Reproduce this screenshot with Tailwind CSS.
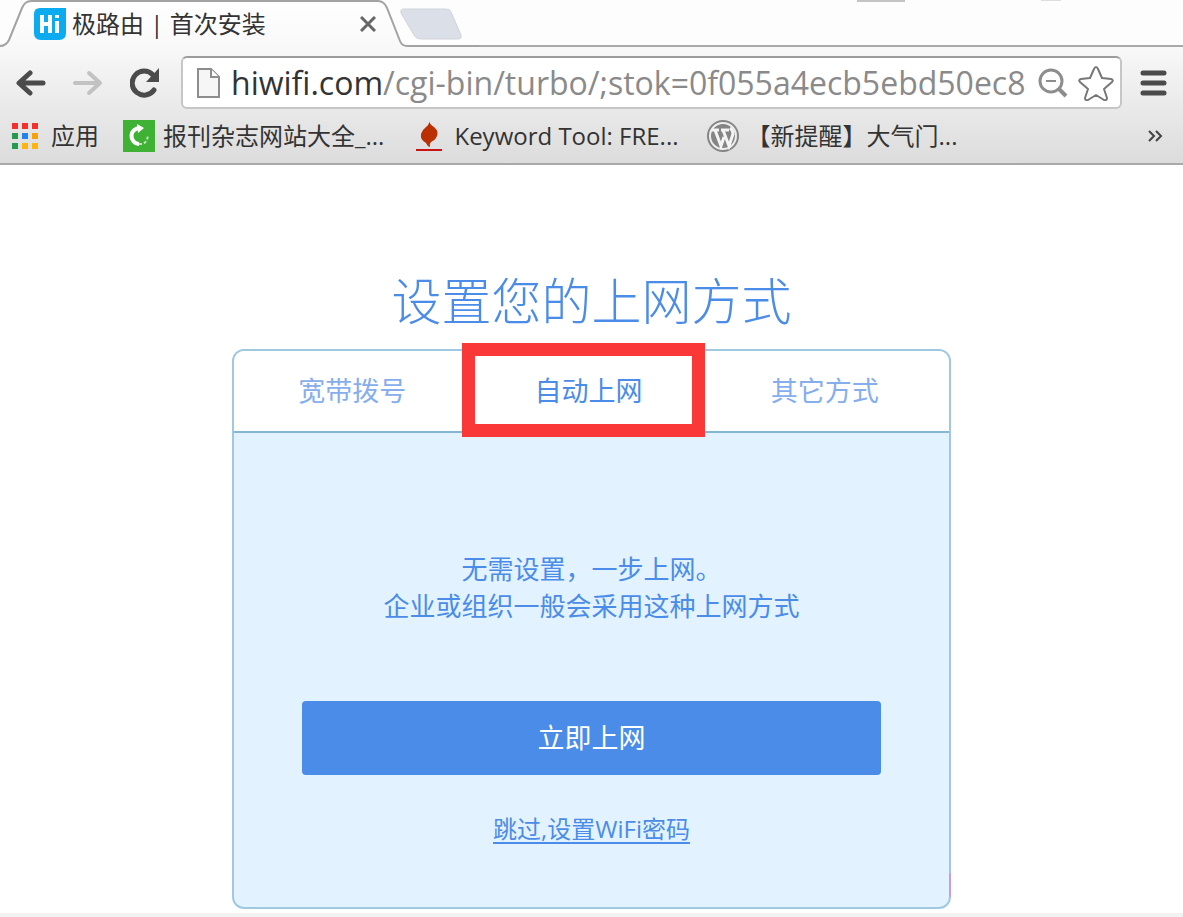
<!DOCTYPE html>
<html lang="zh-CN">
<head>
  <meta charset="UTF-8">
  <meta name="viewport" content="width=device-width, initial-scale=1.0">
  <title>极路由 | 首次安装</title>
  <script src="https://cdn.jsdelivr.net/npm/@tailwindcss/browser@4"></script>
</head>
<body class="min-h-screen flex flex-col bg-white font-['Open_Sans','Noto_Sans_CJK_SC',sans-serif]">

  <header class="border-b-2 border-[#a9a9a9]">
    <!-- Tab strip -->
    <div class="relative h-12 flex items-start overflow-hidden bg-[#fdfdfd]">
      <svg class="absolute left-0 top-0 h-12 w-[480px]" viewBox="0 0 480 48" fill="none">
        <defs>
          <linearGradient id="tab" x1="0" y1="0" x2="0" y2="1">
            <stop offset="0" stop-color="#ffffff" />
            <stop offset="1" stop-color="#f8f8f8" />
          </linearGradient>
        </defs>
        <path d="M404 9h42q4 0 5 3l10 23q1 4-3 4h-37q-5 0-7-4l-13-22q-1-4 3-4z" fill="#dbdfe8" stroke="#d0d3da" />
        <path d="M0 46q6 0 9-6L22 8q3-7 9-7h347q6 0 9 7l13 33q2 5 7 5h73v2H0z" fill="url(#tab)" />
        <path d="M0 46q6 0 9-6L22 8q3-7 9-7h347q6 0 9 7l13 33q2 5 7 5h73" stroke="#a3a3a3" stroke-width="2" />
      </svg>
      <div class="absolute left-[479px] right-0 top-[45px] h-[3px] border-t-2 border-[#a9a9a9] bg-[#f8f8f8]"></div>
      <!-- Clipped window controls -->
      <div class="absolute right-[278px] top-0 h-0.5 w-12 bg-[#c4c4c4]"></div>
      <div class="absolute right-[122px] top-0 h-px w-5 bg-[#dedede]"></div>

      <div class="relative flex h-12 w-[378px] items-center pl-[34px]">
        <svg class="size-8 shrink-0" viewBox="0 0 32 32">
          <path d="M6 0h26v25q0 7-7 7H7q-7 0-7-7V6q0-6 6-6z" fill="#0cabef" />
          <path d="M8 7v18M16 7v18M8 16h8M23 13v12M23 7v3" stroke="#fff" stroke-width="4" fill="none" />
        </svg>
        <span class="ml-1.5 flex-1 whitespace-nowrap text-2xl leading-8 text-[#333]">极路由 | 首次安装</span>
        <button class="p-0.5" aria-label="关闭标签页">
          <svg class="size-4" viewBox="0 0 16 16" fill="none" stroke="#666" stroke-width="3">
            <path d="M1 1l14 14M15 1L1 15" />
          </svg>
        </button>
      </div>
    </div>

    <div class="bg-linear-to-b from-[#f8f8f8] to-[#dcdcdc]">
      <!-- Address bar -->
      <div class="flex items-center pt-2 pl-4 pr-4">
        <button class="w-[57px]" aria-label="后退">
          <svg class="h-7 w-[30px]" viewBox="0 0 30 28" fill="none" stroke="#4b4b4b" stroke-width="5" stroke-linecap="round" stroke-linejoin="round">
            <path d="M27 14H5M14 4L3 14l11 10" />
          </svg>
        </button>
        <button class="w-[57px]" aria-label="前进">
          <svg class="h-7 w-[30px]" viewBox="0 0 30 28" fill="none" stroke="#c2c2c2" stroke-width="4" stroke-linecap="round" stroke-linejoin="round">
            <path d="M2 14h24M16 4l11 10-11 10" />
          </svg>
        </button>
        <button class="w-[51px]" aria-label="刷新">
          <svg class="size-[30px]" viewBox="0 0 30 30" fill="none">
            <path d="M24 22a12 12 0 1 1-1-15" stroke="#4b4b4b" stroke-width="5" stroke-linecap="round" />
            <path d="M29 0v14H16z" fill="#4b4b4b" />
          </svg>
        </button>
        <div class="flex h-[53px] min-w-0 flex-1 items-center rounded-md border-2 border-[#c6c6c6] border-t-[#9c9c9c] bg-white pl-3.5 pr-1.5">
          <svg class="h-[30px] w-6 shrink-0" viewBox="0 0 24 30" fill="#f6f6f6" stroke="#8d8d8d" stroke-width="2">
            <path d="M1 1h13l8 8v20H1z" />
            <path d="M14 1v8h8" fill="#fff" />
          </svg>
          <label for="url" class="ml-2.5 text-[32px] leading-10 text-[#333]">hiwifi.com</label>
          <input id="url" type="text" class="min-w-0 flex-1 text-[32px] leading-10 text-[#8a8a8a] outline-none" value="/cgi-bin/turbo/;stok=0f055a4ecb5ebd50ec8">
          <button class="shrink-0" aria-label="缩放">
            <svg class="size-[30px]" viewBox="0 0 30 30" fill="none" stroke="#8d8d8d" stroke-width="3">
              <circle cx="13" cy="13" r="11" />
              <path d="M8 13h10" stroke-width="2" />
              <path d="M21 21l7 7" stroke-width="4" />
            </svg>
          </button>
          <button class="ml-2.5 shrink-0" aria-label="为此网页添加书签">
            <svg class="size-9" viewBox="0 0 36 36" fill="#fff" stroke="#777" stroke-width="2" stroke-linejoin="round">
              <path d="M18 2q1 0 2 2l4 9 9 1q3 1 1 3l-8 7 3 9q0 3-3 2l-8-5-8 5q-3 1-3-2l3-9-8-7q-2-2 1-3l9-1 4-9q1-2 2-2z" />
            </svg>
          </button>
        </div>
        <button class="ml-[18px]" aria-label="菜单">
          <svg class="h-7 w-[27px]" viewBox="0 0 27 28" stroke="#4b4b4b" stroke-width="5" stroke-linecap="round">
            <path d="M3 4h21M3 14h21M3 24h21" />
          </svg>
        </button>
      </div>

      <!-- Bookmarks bar -->
      <nav class="flex h-[54px] items-center whitespace-nowrap pl-3 pr-5 text-2xl text-[#333]">
        <a href="#" class="flex items-center gap-3">
          <svg class="size-[27px]" viewBox="0 0 27 27">
            <path d="M0 0h6v6H0zM10 0h6v6h-6zM20 0h6v6h-6z" fill="#f5302c" />
            <path d="M0 10h6v6H0zM0 20h6v6H0z" fill="#239a50" />
            <path d="M10 10h6v6h-6z" fill="#1e82f0" />
            <path d="M20 10h6v6h-6z" fill="#f5a20a" />
            <path d="M10 20h6v6h-6zM20 20h6v6h-6z" fill="#fdb40c" />
          </svg>
          应用
        </a>
        <a href="#" class="ml-6 flex items-center gap-2">
          <svg class="size-8" viewBox="0 0 32 32" fill="none">
            <path d="M0 0h32v32H0z" fill="#3fb134" />
            <path d="M17 8a8 8 0 0 0-1 16" stroke="#fff" stroke-width="4" />
            <path d="M14 4l7 4-6 5z" fill="#fff" />
            <path d="M16 24q8 1 9-9" stroke="#c4e8c0" stroke-width="2" stroke-dasharray="3 2" />
          </svg>
          报刊杂志网站大全_...
        </a>
        <a href="#" class="ml-8 flex items-center gap-3">
          <svg class="h-8 w-[26px]" viewBox="0 0 26 32">
            <path d="M13 0q0 4 5 7 6 5 2 11-1 2-5 4-2 2-1 5-3-1-4-4-6-3-5-9 1-4 5-7 4-3 3-7z" fill="#bb3000" />
            <path d="M0 29h26v2H0z" fill="#c81414" />
          </svg>
          Keyword Tool: FRE...
        </a>
        <a href="#" class="ml-7 flex items-center gap-2">
          <svg class="size-8" viewBox="0 0 32 32" fill="none" stroke="#858585">
            <circle cx="16" cy="16" r="15" fill="#eee" stroke-width="2" />
            <circle cx="16" cy="16" r="12" fill="#858585" stroke="none" />
            <path d="M5 10h7M14 10h8M8 10l6 16 3-9M16 10l6 16 4-12q0-4-3-6" stroke="#f4f4f4" stroke-width="3" />
          </svg>
          【新提醒】大气门...
        </a>
        <button class="ml-auto" aria-label="更多书签">
          <svg class="h-3 w-[15px]" viewBox="0 0 15 12" fill="none" stroke="#444" stroke-width="2">
            <path d="M1 1l5 5-5 5M8 1l5 5-5 5" />
          </svg>
        </button>
      </nav>
    </div>
  </header>

  <main class="flex-1 px-4 pt-[100px] text-[#4b8ce8]">
    <h1 class="text-center text-[50px] leading-[72px] font-light">设置您的上网方式</h1>

    <section class="relative mx-auto mt-3 max-w-[719px] rounded-xl border-2 border-[#9fc9e0] bg-[#e2f2fe]">
      <div class="grid grid-cols-3 rounded-t-[10px] border-b-2 border-[#84b7d3] bg-white pr-1.5 text-[27px] leading-9" role="tablist">
        <button class="h-20 text-[#86aeed]" role="tab">宽带拨号</button>
        <div class="relative">
          <button class="h-20 w-full" role="tab" aria-selected="true">自动上网</button>
          <div class="pointer-events-none absolute -top-2 -bottom-1.5 -left-2 right-0.5 border-[13px] border-[#fb3838]"></div>
        </div>
        <button class="h-20 text-[#86aeed]" role="tab">其它方式</button>
      </div>

      <div class="flex flex-col items-center px-[68px] pt-[118px] pb-[60px]">
        <p class="text-center text-[26px] leading-[37px]">无需设置，一步上网。<br>企业或组织一般会采用这种上网方式</p>
        <button class="mt-[76px] h-[74px] w-full rounded bg-[#4b8ce8] text-[27px] text-white">立即上网</button>
        <a href="#" class="mt-9 text-2xl leading-9 underline underline-offset-4">跳过,设置WiFi密码</a>
      </div>
      <div class="absolute -right-0.5 bottom-2.5 h-6 w-0.5 rounded-full bg-[#d09bd3]"></div>
    </section>
  </main>

  <footer class="h-1 bg-[#f2f2f2]"></footer>
</body>
</html>
